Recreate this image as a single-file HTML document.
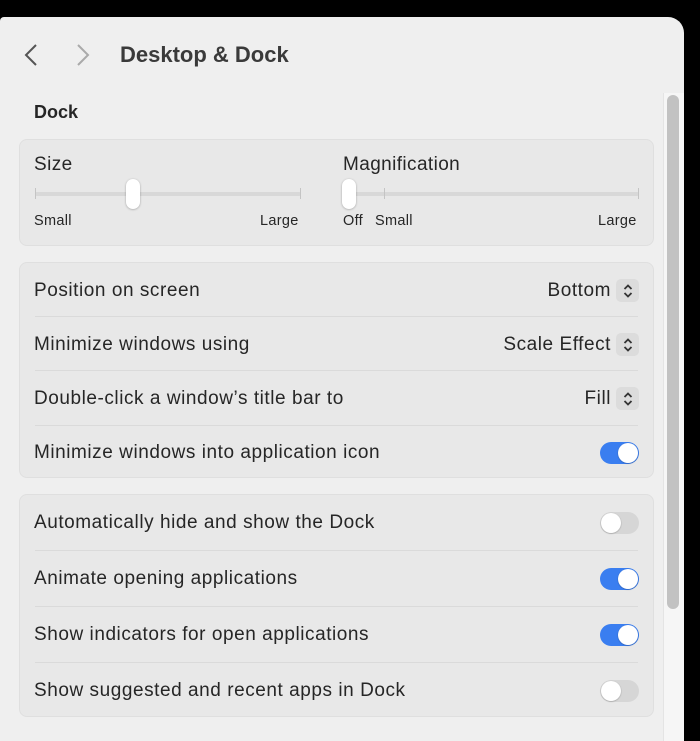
<!DOCTYPE html>
<html><head><meta charset="utf-8"><style>
*{box-sizing:border-box;margin:0;padding:0}
html,body{width:700px;height:741px;overflow:hidden}
body{background:#000;position:relative;font-family:"Liberation Sans",sans-serif;color:#262626}
.win{position:absolute;left:0;top:17px;width:684px;height:724px;background:#efefef;border-top-right-radius:16px;border-top-left-radius:4px;overflow:hidden}
.t{position:absolute;white-space:nowrap}
.card{position:absolute;left:19px;width:635px;background:#e8e8e8;border:1px solid #dfdfdf;border-radius:8px}
.row{position:absolute;left:14px;right:14px;height:55px;font-size:19px;letter-spacing:0.55px;display:flex;align-items:center;justify-content:space-between}
.sep{position:absolute;left:15px;right:15px;height:1px;background:#dadada}
.tog{width:39px;height:22px;border-radius:11px;position:relative;background:#d6d6d6}
.tog::after{content:"";position:absolute;top:1px;left:1px;width:20px;height:20px;border-radius:50%;background:#fff;box-shadow:0 0.5px 1.5px rgba(0,0,0,.3)}
.tog.on{background:#3a7ef0}
.tog.on::after{left:18px}
.val{display:flex;align-items:center;gap:5px}
.step{width:23px;height:23px;background:#dcdcdc;border-radius:5px;display:flex;align-items:center;justify-content:center}
.track{position:absolute;height:4px;background:#d8d8d8;border-radius:2px}
.tick{position:absolute;width:1px;height:11px;background:#c4c4c4}
.knob{position:absolute;width:14px;height:30px;border-radius:7px;background:#fff;box-shadow:0 0.5px 2px rgba(0,0,0,.3)}
.sm{font-size:14.5px;letter-spacing:0.3px}
.lbl{font-size:19px;letter-spacing:0.4px}
</style></head><body>
<div class="win">
 <svg style="position:absolute;left:22px;top:26px" width="18" height="24"><path d="M14 2 L4 12 L14 22" stroke="#555" stroke-width="2" fill="none"/></svg>
 <svg style="position:absolute;left:74px;top:26px" width="18" height="24"><path d="M4 2 L14 12 L4 22" stroke="#aaa" stroke-width="2" fill="none"/></svg>
 <div class="t" style="left:120px;top:25px;font-size:22px;font-weight:bold;color:#3a3a3a">Desktop &amp; Dock</div>
 <div class="t" style="left:34px;top:85px;font-size:18px;font-weight:bold">Dock</div>
 <div style="position:absolute;left:663px;top:76px;width:21px;height:670px;background:#f6f6f6;border-left:1px solid #e4e4e4"></div>
 <div style="position:absolute;left:667px;top:78px;width:12px;height:514px;border-radius:6px;background:#c2c2c2"></div>

 <div class="card" style="top:122px;height:107px">
  <div class="t lbl" style="left:14px;top:14px">Size</div>
  <div class="t lbl" style="left:323px;top:14px">Magnification</div>
  <div class="track" style="left:15px;top:52px;width:266px"></div>
  <div class="tick" style="left:15px;top:48px"></div><div class="tick" style="left:280px;top:48px"></div>
  <div class="knob" style="left:106px;top:39px"></div>
  <div class="track" style="left:329px;top:52px;width:290px"></div>
  <div class="tick" style="left:364px;top:48px"></div><div class="tick" style="left:618px;top:48px"></div>
  <div class="knob" style="left:322px;top:39px"></div>
  <div class="t sm" style="left:14px;top:73px">Small</div>
  <div class="t sm" style="left:240px;top:73px">Large</div>
  <div class="t sm" style="left:323px;top:73px">Off</div>
  <div class="t sm" style="left:355px;top:73px">Small</div>
  <div class="t sm" style="left:578px;top:73px">Large</div>
 </div>

 <div class="card" style="top:245px;height:216px">
  <div class="row" style="top:0"><span>Position on screen</span><span class="val">Bottom<span class="step"><svg width="10" height="16"><path d="M1.5 6 L5 2.5 L8.5 6 M1.5 10 L5 13.5 L8.5 10" stroke="#333" stroke-width="1.8" fill="none"/></svg></span></span></div>
  <div class="sep" style="top:53px"></div>
  <div class="row" style="top:54px"><span>Minimize windows using</span><span class="val">Scale Effect<span class="step"><svg width="10" height="16"><path d="M1.5 6 L5 2.5 L8.5 6 M1.5 10 L5 13.5 L8.5 10" stroke="#333" stroke-width="1.8" fill="none"/></svg></span></span></div>
  <div class="sep" style="top:107px"></div>
  <div class="row" style="top:108px"><span>Double-click a window’s title bar to</span><span class="val">Fill<span class="step"><svg width="10" height="16"><path d="M1.5 6 L5 2.5 L8.5 6 M1.5 10 L5 13.5 L8.5 10" stroke="#333" stroke-width="1.8" fill="none"/></svg></span></span></div>
  <div class="sep" style="top:162px"></div>
  <div class="row" style="top:162px"><span>Minimize windows into application icon</span><span class="tog on"></span></div>
 </div>

 <div class="card" style="top:477px;height:223px">
  <div class="row" style="top:0"><span>Automatically hide and show the Dock</span><span class="tog"></span></div>
  <div class="sep" style="top:55px"></div>
  <div class="row" style="top:56px"><span>Animate opening applications</span><span class="tog on"></span></div>
  <div class="sep" style="top:111px"></div>
  <div class="row" style="top:112px"><span>Show indicators for open applications</span><span class="tog on"></span></div>
  <div class="sep" style="top:167px"></div>
  <div class="row" style="top:168px"><span>Show suggested and recent apps in Dock</span><span class="tog"></span></div>
 </div>
</div>
</body></html>
